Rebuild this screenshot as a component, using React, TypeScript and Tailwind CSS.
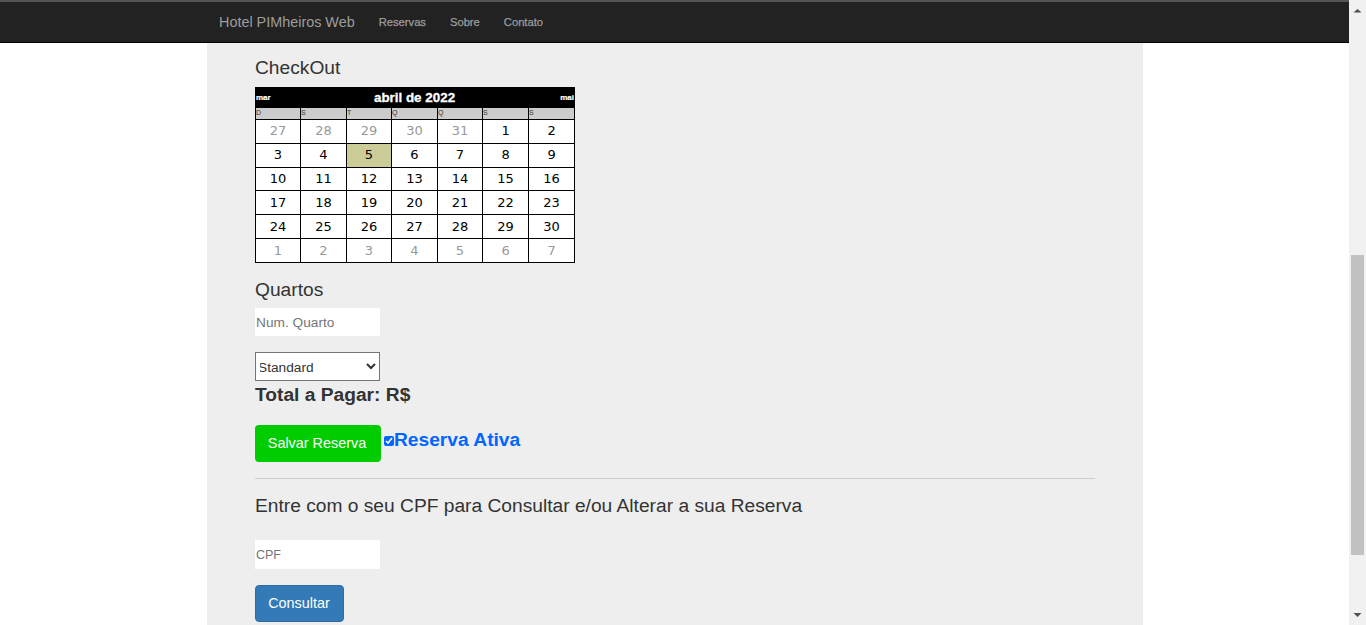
const rows = [
  [["27",1],["28",1],["29",1],["30",1],["31",1],["1",0],["2",0]],
  [["3",0],["4",0],["5",2],["6",0],["7",0],["8",0],["9",0]],
  [["10",0],["11",0],["12",0],["13",0],["14",0],["15",0],["16",0]],
  [["17",0],["18",0],["19",0],["20",0],["21",0],["22",0],["23",0]],
  [["24",0],["25",0],["26",0],["27",0],["28",0],["29",0],["30",0]],
  [["1",1],["2",1],["3",1],["4",1],["5",1],["6",1],["7",1]],
] as [string, number][][];
const days = ["D", "S", "T", "Q", "Q", "S", "S"];

export default function App() {
  return (
    <div className="flex h-[625px] w-[1366px] overflow-hidden bg-white font-['Liberation_Sans',Arial,sans-serif] text-[14.4px] text-[#333]">
      <div className="flex w-[1349px] flex-col">
        <nav className="flex h-[43px] shrink-0 items-center border-t-2 border-b border-t-[#555] border-b-black bg-[#222] pt-[1px] pl-[219px]">
          <span className="text-[14.4px] text-[#9d9d9d]">Hotel PIMheiros Web</span>
          <span className="ml-[24px] text-[11.2px] text-[#9d9d9d] [-webkit-text-stroke:0.25px_#9d9d9d]">Reservas</span>
          <span className="ml-[24px] text-[11.2px] text-[#9d9d9d] [-webkit-text-stroke:0.25px_#9d9d9d]">Sobre</span>
          <span className="ml-[24px] text-[11.2px] text-[#9d9d9d] [-webkit-text-stroke:0.25px_#9d9d9d]">Contato</span>
        </nav>
        <main className="ml-[207px] flex w-[936px] flex-1 flex-col overflow-hidden bg-[#eee] px-12">
          <h4 className="mt-[14px] text-[19.2px] leading-[21px]">CheckOut</h4>
          <table className="mt-[9px] h-[176px] w-[319px] table-fixed border-collapse bg-white font-['DejaVu_Sans',sans-serif] text-[13px]">
            <colgroup>
              <col className="w-[45px]" />
              <col className="w-[46px]" />
              <col className="w-[45px]" />
              <col className="w-[46px]" />
              <col className="w-[45px]" />
              <col className="w-[46px]" />
              <col className="w-[46px]" />
            </colgroup>
            <thead>
              <tr className="h-[20px] bg-black text-white">
                <th className="border border-black p-0 text-left font-['Liberation_Sans',sans-serif] text-[8px] leading-[16px] font-bold [-webkit-text-stroke:0.2px_white]">mar</th>
                <th colSpan={5} className="border border-black p-0 font-['Liberation_Sans',sans-serif] text-[13.4px] leading-[18px] font-bold [-webkit-text-stroke:0.3px_white]">abril de 2022</th>
                <th className="border border-black p-0 text-right font-['Liberation_Sans',sans-serif] text-[8px] leading-[16px] font-bold [-webkit-text-stroke:0.2px_white]">mai</th>
              </tr>
              <tr className="h-[12px] bg-[#ccc] text-[#333]">
                {days.map((d, i) => (
                  <th key={i} className="border border-t-0 border-black p-0 text-left align-top font-['Liberation_Sans',sans-serif] text-[7px] leading-[10px] font-normal">{d}</th>
                ))}
              </tr>
            </thead>
            <tbody>
              {rows.map((r, i) => (
                <tr key={i}>
                  {r.map(([t, k], j) => (
                    <td
                      key={j}
                      className={`border border-black p-0 text-center leading-[18px] ${k === 1 ? "text-[#999]" : "text-black"} ${k === 2 ? "bg-[#cccc99]" : ""}`}
                    >
                      {t}
                    </td>
                  ))}
                </tr>
              ))}
            </tbody>
          </table>
          <h4 className="mt-[16px] text-[19.2px] leading-[21px]">Quartos</h4>
          <input
            placeholder="Num. Quarto"
            className="mt-[8px] h-[28px] w-[125px] shrink-0 bg-white pl-px text-[13.7px] placeholder:text-[#757575] focus:outline-none"
          />
          <select className="mt-[16px] h-[29px] w-[125px] shrink-0 border border-[#767676] bg-white pt-[2px] text-[13.7px] text-[#333] [appearance:auto] [text-indent:-2px]">
            <option>Standard</option>
          </select>
          <div className="mt-[3px] text-[19.2px] leading-[22px] font-bold">Total a Pagar: R$</div>
          <div className="mt-[19px] flex items-start">
            <button className="h-[37px] w-[126px] rounded-[4px] bg-[#00cc00] pr-[2px] text-[14.4px] text-white">Salvar Reserva</button>
            <input type="checkbox" defaultChecked className="mt-[11px] ml-[3px] h-[10px] w-[10px] accent-[#0066ff]" />
            <span className="mt-[4px] text-[19.2px] leading-[22px] font-bold text-[#0066ff]">Reserva Ativa</span>
          </div>
          <hr className="mt-[16px] border-t border-[#ccc]" />
          <h4 className="mt-[16px] text-[19.2px] leading-[21px]">Entre com o seu CPF para Consultar e/ou Alterar a sua Reserva</h4>
          <input
            placeholder="CPF"
            className="mt-[24px] h-[29px] w-[125px] shrink-0 bg-white pl-px text-[12.5px] placeholder:text-[#757575] focus:outline-none"
          />
          <button className="mt-[16px] h-[37px] w-[89px] shrink-0 rounded-[4px] border border-[#2e6da4] bg-[#337ab7] pr-[1px] text-[14.4px] text-white">Consultar</button>
        </main>
      </div>
      <div className="flex w-[17px] shrink-0 flex-col bg-[#f1f1f1]">
        <svg width="17" height="17" viewBox="0 0 17 17" className="shrink-0"><path d="M4.5 12.5 8.5 9l4 3.5z" fill="#505050" /></svg>
        <div className="mx-[2px] mt-[238px] h-[300px] bg-[#c1c1c1]" />
        <div className="flex-1" />
        <svg width="17" height="17" viewBox="0 0 17 17" className="shrink-0"><path d="M4.5 5 8.5 9l4-4z" fill="#505050" /></svg>
      </div>
    </div>
  );
}
